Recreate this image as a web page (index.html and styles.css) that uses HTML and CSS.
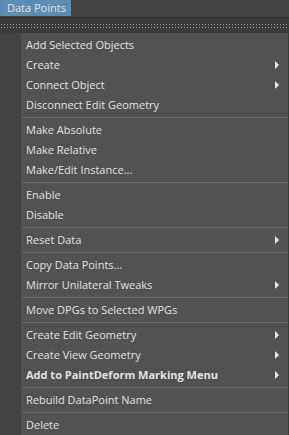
FILE: index.html
```html
<!DOCTYPE html>
<html lang="en">
<head>
  <meta charset="UTF-8">
  <title>Data Points</title>
  <link rel="stylesheet" href="styles.css">
</head>
<body>
  <div class="menubar">
    <span class="menu-title">Data Points</span>
  </div>
  <div class="tearoff">
    <div class="dots"></div>
    <div class="dots"></div>
  </div>
  <ul class="menu">
    <li class="item">Add Selected Objects</li>
    <li class="item sub">Create</li>
    <li class="item sub">Connect Object</li>
    <li class="item">Disconnect Edit Geometry</li>
    <li class="sep"></li>
    <li class="item">Make Absolute</li>
    <li class="item">Make Relative</li>
    <li class="item">Make/Edit Instance...</li>
    <li class="sep"></li>
    <li class="item">Enable</li>
    <li class="item">Disable</li>
    <li class="sep"></li>
    <li class="item sub">Reset Data</li>
    <li class="sep"></li>
    <li class="item">Copy Data Points...</li>
    <li class="item sub">Mirror Unilateral Tweaks</li>
    <li class="sep"></li>
    <li class="item">Move DPGs to Selected WPGs</li>
    <li class="sep"></li>
    <li class="item sub">Create Edit Geometry</li>
    <li class="item sub">Create View Geometry</li>
    <li class="item sub bold">Add to PaintDeform Marking Menu</li>
    <li class="sep"></li>
    <li class="item">Rebuild DataPoint Name</li>
    <li class="sep"></li>
    <li class="item">Delete</li>
  </ul>
</body>
</html>
```

FILE: styles.css
```css
body {
  margin: 0;
  padding: 0;
  width: 289px;
  height: 435px;
  overflow: hidden;
  background-color: #444444;
  font-family: "Open Sans", "Noto Sans", sans-serif;
  font-size: 11px;
  color: #e0e0e0;
}

.menubar {
  height: 17px;
  background-color: #444444;
  border-bottom: 1px solid #2f2f2f;
  display: flex;
}

.menu-title {
  background-color: #5b8db3;
  color: #e2e2e2;
  width: 71px;
  height: 16px;
  line-height: 16px;
  padding-left: 7px;
  box-sizing: border-box;
  white-space: nowrap;
}

.tearoff {
  height: 15px;
  background-color: #3c3c3c;
  display: flex;
  flex-direction: column;
  justify-content: center;
  gap: 2px;
  padding: 0 1px;
}

.dots {
  height: 1px;
  background-image: linear-gradient(to right, #a0a0a0 1px, transparent 1px);
  background-size: 3px 1px;
}

/* menu body with the dark icon gutter on the left */
.menu {
  list-style: none;
  margin: 0;
  padding: 2px 0 0 0;
  height: 402px;
  background: linear-gradient(to right, #444444 21px, #525252 21px);
  border-right: 1px solid #3a3a3a;
}

.item {
  position: relative;
  height: 20px;
  line-height: 20px;
  padding-left: 26px;
}

.bold {
  font-weight: bold;
}

.sub::after {
  content: "";
  position: absolute;
  right: 9px;
  top: 6px;
  border-left: 4px solid #e8e8e8;
  border-top: 4px solid transparent;
  border-bottom: 4px solid transparent;
}

.sep {
  height: 1px;
  margin: 2px 0 2px 22px;
  background-color: #696969;
}
```
